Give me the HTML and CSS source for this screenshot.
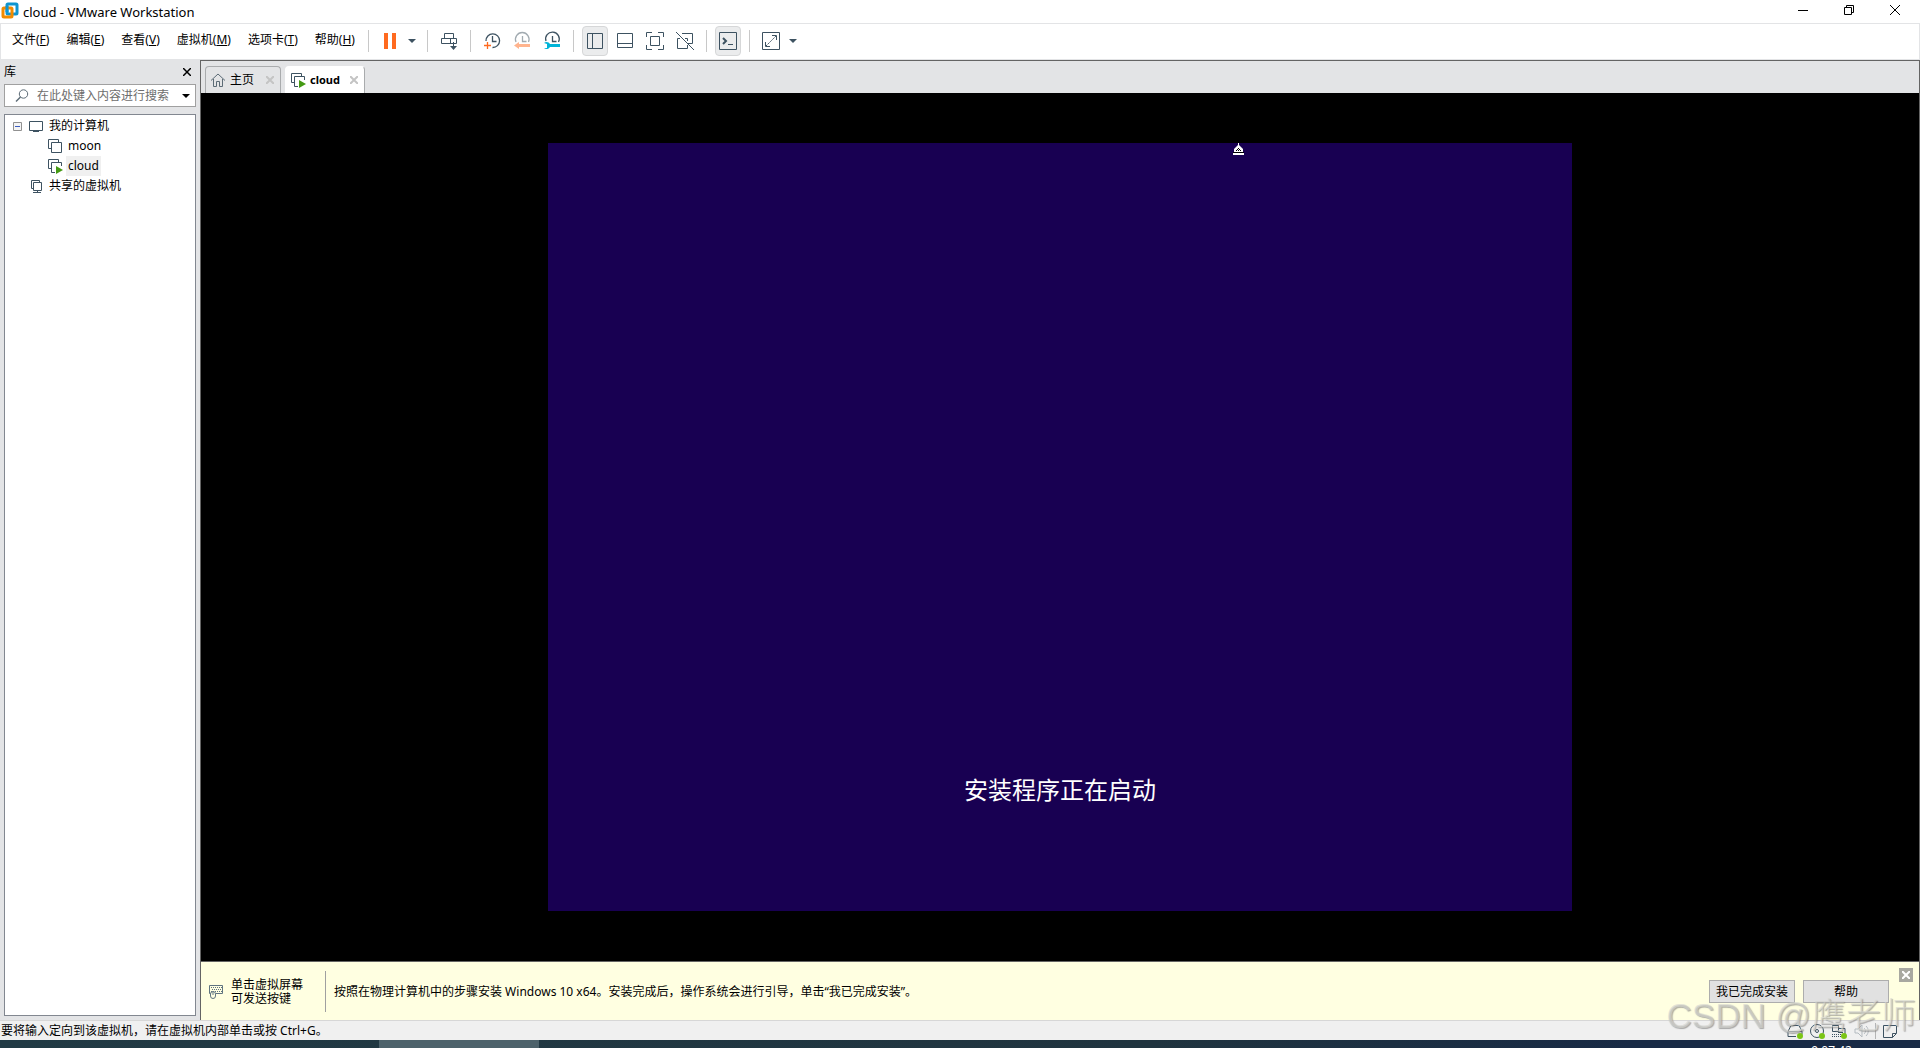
FILE: index.html
```html
<!DOCTYPE html>
<html lang="zh-CN">
<head>
    <meta charset="UTF-8">
    <meta name="viewport" content="width=device-width, initial-scale=1.0">
    <title>cloud - VMware Workstation</title>
    <link rel="stylesheet" href="styles.css">
</head>
<body>
    <header class="titlebar">
        <svg class="logo" width="18" height="18" viewBox="0 0 18 18" fill="none">
            <rect x="6" y="2" width="10" height="10" rx="1" stroke="#0f95d0" stroke-width="3"/>
            <rect x="2" y="6" width="9" height="9" rx="1" stroke="#f38b00" stroke-width="3"/>
            <path d="M6 4v6" stroke="#0f95d0" stroke-width="3"/>
        </svg>
        <h1 class="title">cloud - VMware Workstation</h1>
        <div class="window-controls">
            <button type="button" class="window-button" aria-label="最小化">
                <svg width="12" height="12" viewBox="0 0 12 12"><path d="M1 6.500h10" stroke="#000"/></svg>
            </button>
            <button type="button" class="window-button" aria-label="还原">
                <svg width="12" height="12" viewBox="0 0 12 12" fill="none" stroke="#000"><path d="M1.500 3.500h7v7h-7zM3.500 3V1.500h7v7H9"/></svg>
            </button>
            <button type="button" class="window-button" aria-label="关闭">
                <svg width="12" height="12" viewBox="0 0 12 12"><path d="M1 1l10 10M11 1L1 11" stroke="#000"/></svg>
            </button>
        </div>
    </header>

    <div class="toolbar">
        <nav class="menu">
            <button type="button" class="menu-item">文件(<u>F</u>)</button>
            <button type="button" class="menu-item">编辑(<u>E</u>)</button>
            <button type="button" class="menu-item">查看(<u>V</u>)</button>
            <button type="button" class="menu-item">虚拟机(<u>M</u>)</button>
            <button type="button" class="menu-item">选项卡(<u>T</u>)</button>
            <button type="button" class="menu-item">帮助(<u>H</u>)</button>
        </nav>
        <div class="tool-group">
            <button type="button" class="tool tool-split" aria-label="挂起">
                <svg width="20" height="20" viewBox="0 0 20 20"><path d="M4 2h4v16H4zM12 2h4v16h-4z" fill="#ff6a1f"/></svg>
                <svg width="8" height="4" viewBox="0 0 8 4"><path d="M0 0h8L4 4z" fill="#3d5261"/></svg>
            </button>
        </div>
        <div class="tool-group">
            <button type="button" class="tool" aria-label="发送 Ctrl+Alt+Del">
                <svg width="20" height="20" viewBox="0 0 20 20" fill="none" stroke="#3d5261"><path d="M5.500 7.500v-5h9v5M2.500 7.500h15v5h-15zM11.500 7.500v5M14.500 11v6"/><path d="M11 15h7l-3.500 4z" fill="#3d5261" stroke="none"/></svg>
            </button>
        </div>
        <div class="tool-group">
            <button type="button" class="tool" aria-label="拍摄快照">
                <svg width="20" height="20" viewBox="0 0 20 20" fill="none" stroke="#3d5261"><path d="M4 10A6.800 6.800 0 1 1 10.500 16.500M10.500 5v5.500h4" stroke-width="1.300"/><path d="M2 14.500h7M5.500 11v7" stroke="#ff6a1f" stroke-width="1.300"/></svg>
            </button>
            <button type="button" class="tool" aria-label="恢复快照" disabled>
                <svg width="20" height="20" viewBox="0 0 20 20" fill="none" stroke="#a2abb1"><path d="M4 11A6.800 6.800 0 1 1 16.500 11M10.500 5v5.500h4" stroke-width="1.300"/><path d="M2 14.500L7 11v2h11v3H7v2z" fill="#ffb48e" stroke="none"/></svg>
            </button>
            <button type="button" class="tool" aria-label="管理快照">
                <svg width="20" height="20" viewBox="0 0 20 20" fill="none" stroke="#3d5261"><path d="M4 10A6.800 6.800 0 1 1 16.500 11M10.500 5v5.500h4" stroke-width="1.300"/><path d="M2 12c2-2 5-1 6 1h10v3H8c-1 2-4 3-6 1h3v-4z" fill="#00b4d8" stroke="none"/></svg>
            </button>
        </div>
        <div class="tool-group">
            <button type="button" class="tool tool-active" aria-label="显示库">
                <svg width="20" height="20" viewBox="0 0 20 20" fill="none" stroke="#3d5261"><path d="M2.500 2.500h15v15h-15zM7.500 2v16"/></svg>
            </button>
            <button type="button" class="tool" aria-label="缩略图栏">
                <svg width="20" height="20" viewBox="0 0 20 20" fill="none" stroke="#3d5261"><path d="M2.500 2.500h15v14h-15zM2 12.500h16"/></svg>
            </button>
            <button type="button" class="tool" aria-label="全屏">
                <svg width="20" height="20" viewBox="0 0 20 20" fill="none" stroke="#3d5261"><path d="M1.500 6V1.500H7M13 1.500h5.500V6M18.500 14v4.500H13M7 18.500H1.500V14M5.500 5.500h9v9h-9z"/></svg>
            </button>
            <button type="button" class="tool" aria-label="Unity">
                <svg width="20" height="20" viewBox="0 0 20 20" fill="none" stroke="#3d5261"><path d="M1 1l18 18M7 2.500h10.500v10H13M5 7.500H2.500v10h10V14M10 7.500h2.500V10"/></svg>
            </button>
        </div>
        <div class="tool-group">
            <button type="button" class="tool tool-active" aria-label="控制台视图">
                <svg width="20" height="20" viewBox="0 0 20 20" fill="none" stroke="#3d5261"><path d="M1.500 1.500h17v17h-17zM10 13.500h5"/><path d="M5 7l3 3-3 3" stroke-width="2"/></svg>
            </button>
        </div>
        <div class="tool-group">
            <button type="button" class="tool tool-split" aria-label="自由拉伸">
                <svg width="20" height="20" viewBox="0 0 20 20" fill="none" stroke="#3d5261"><path d="M1.500 1.500h17v17h-17zM11 4.500h4.500V9M4.500 11v4.500H9"/><path d="M5 15L15 5" stroke-dasharray="2 1"/></svg>
                <svg width="8" height="4" viewBox="0 0 8 4"><path d="M0 0h8L4 4z" fill="#3d5261"/></svg>
            </button>
        </div>
    </div>

    <div class="workspace">
        <aside class="library">
            <div class="library-header">
                <h2 class="library-title">库</h2>
                <button type="button" class="library-close" aria-label="关闭库">
                    <svg width="8" height="8" viewBox="0 0 8 8"><path d="M0 0l8 8M8 0L0 8" stroke="#000" stroke-width="1.500"/></svg>
                </button>
            </div>
            <div class="search">
                <svg width="14" height="14" viewBox="0 0 14 14" fill="none" stroke="#5c6b76"><circle cx="8.500" cy="5" r="4.200"/><path d="M5.500 8L1 12.500" stroke-width="1.500"/></svg>
                <input class="search-input" type="text" aria-label="搜索" placeholder="在此处键入内容进行搜索">
                <button type="button" class="search-arrow" aria-label="搜索选项">
                    <svg width="8" height="4" viewBox="0 0 8 4"><path d="M0 0h8L4 4z"/></svg>
                </button>
            </div>
            <ul class="tree">
                <li class="tree-row">
                    <svg width="9" height="9" viewBox="0 0 9 9" fill="#f4f4f4" stroke="#919191"><path d="M.5.5h8v8h-8z"/><path d="M2 4.500h5" stroke="#3b5cc0"/></svg>
                    <svg class="tree-icon" width="16" height="16" viewBox="0 0 16 16" fill="none" stroke="#3d5261"><path d="M1.500 3.500h13v9h-13zM8 12v2M5 13.500h6"/></svg>
                    <span class="tree-label">我的计算机</span>
                </li>
                <li class="tree-row tree-child">
                    <svg class="tree-icon" width="16" height="16" viewBox="0 0 16 16" fill="none" stroke="#3d5261"><path d="M4 10.500H1.500v-9h10V4M4.500 4.500h10v10h-10z"/></svg>
                    <span class="tree-label">moon</span>
                </li>
                <li class="tree-row tree-child">
                    <svg class="tree-icon" width="16" height="16" viewBox="0 0 16 16" fill="none" stroke="#3d5261"><path d="M4 10.500H1.500v-9h10V4M8 14.500H4.500v-10h10V8"/><path d="M9 8l7 4-7 4z" fill="#449a13" stroke="none"/></svg>
                    <span class="tree-label tree-selected">cloud</span>
                </li>
                <li class="tree-row tree-shared">
                    <svg class="tree-icon" width="16" height="16" viewBox="0 0 16 16" fill="none" stroke="#3d5261"><path d="M5 10.500H3.500v-8h8V4M5.500 4.500h8v8h-8zM9.500 12v3M5 14.500h8"/></svg>
                    <span class="tree-label">共享的虚拟机</span>
                </li>
            </ul>
        </aside>

        <main class="console">
            <div class="tabs">
                <div class="tab tab-home">
                    <svg width="16" height="16" viewBox="0 0 16 16" fill="none" stroke="#5c6b76"><path d="M1 8.500L8 2l7 6.500M3.500 7v7.500h3v-5h3v5h3V7"/></svg>
                    <button type="button" class="tab-label">主页</button>
                    <button type="button" class="tab-close" aria-label="关闭主页">
                        <svg width="8" height="8" viewBox="0 0 8 8"><path d="M0 0l8 8M8 0L0 8" stroke="#c4c4c4" stroke-width="2"/></svg>
                    </button>
                </div>
                <div class="tab tab-current">
                    <svg width="16" height="16" viewBox="0 0 16 16" fill="none" stroke="#3d5261"><path d="M4 10.500H1.500v-9h10V4M8 14.500H4.500v-10h10V8"/><path d="M9 8l7 4-7 4z" fill="#449a13" stroke="none"/></svg>
                    <button type="button" class="tab-label">cloud</button>
                    <button type="button" class="tab-close" aria-label="关闭 cloud">
                        <svg width="8" height="8" viewBox="0 0 8 8"><path d="M0 0l8 8M8 0L0 8" stroke="#c4c4c4" stroke-width="2"/></svg>
                    </button>
                </div>
            </div>
            <div class="stage">
                <div class="guest">
                    <svg class="cursor" width="13" height="12" viewBox="0 0 13 12"><path d="M6 0h1v2l4 4v3h1v3H1V9h1V6l4-4z" fill="#fff"/><path d="M1 9.500h11M6 5.500h1M5 6.500h1M7 6.500h1M4 7.500h1M6 7.500h1M8 7.500h1" stroke="#000"/></svg>
                    <p class="guest-message">安装程序正在启动</p>
                </div>
            </div>
            <div class="notice">
                <div class="notice-input">
                    <svg width="15" height="16" viewBox="0 0 15 16" fill="none" stroke="#5f7480"><path d="M3 9.500H.5v-8h13v8H7"/><path d="M2 3.500h11M3 5.500h10M2 7.500h11" stroke-dasharray="1 1"/><rect x="1.500" y="7.500" width="5" height="7" rx="2.500" fill="#ffffe1"/><path d="M4 8v3"/></svg>
                    <span>单击虚拟屏幕<br>可发送按键</span>
                </div>
                <p class="notice-text">按照在物理计算机中的步骤安装 Windows 10 x64。安装完成后，操作系统会进行引导，单击“我已完成安装”。</p>
                <div class="notice-actions">
                    <button type="button" class="notice-button">我已完成安装</button>
                    <button type="button" class="notice-button">帮助</button>
                </div>
                <button type="button" class="notice-close" aria-label="关闭提示">
                    <svg width="8" height="8" viewBox="0 0 8 8"><path d="M0 0l8 8M8 0L0 8" stroke="#fff" stroke-width="2"/></svg>
                </button>
            </div>
        </main>
    </div>

    <footer class="statusbar">
        <span>要将输入定向到该虚拟机，请在虚拟机内部单击或按 Ctrl+G。</span>
        <div class="devices">
            <svg width="16" height="16" viewBox="0 0 16 16" fill="none" stroke="#3d5261"><path d="M1 13.500V8.500L4 2.500h8l3 6v3M1 8.500h14M1 13.500h8"/><circle cx="13" cy="13" r="3" fill="#7cc516" stroke="none"/></svg>
            <svg width="16" height="16" viewBox="0 0 16 16" fill="none" stroke="#3d5261"><circle cx="8" cy="8" r="6.500"/><circle cx="8" cy="8" r="1.500"/><circle cx="13" cy="13" r="3" fill="#7cc516" stroke="none"/></svg>
            <svg width="16" height="16" viewBox="0 0 16 16" fill="none" stroke="#3d5261"><path d="M1.500 8.500v-6h6v6zM7 5.500h7v7M7 9.500h5"/><path d="M1 13.500h9M1 11.500h9" stroke-dasharray="1 1"/><circle cx="13" cy="13" r="3" fill="#7cc516" stroke="none"/></svg>
            <svg width="16" height="16" viewBox="0 0 16 16" fill="none" stroke="#b4bbc0"><path d="M2 6h3l4-4v12l-4-4H2zM11 5c2 2 2 4 0 6M13 3c3 3 3 7 0 10"/></svg>
            <span class="devices-rule"></span>
            <svg width="16" height="16" viewBox="0 0 16 16" fill="none" stroke="#3d5261"><path d="M1.500 2.500h13v8l-4 4h-9zM14 10.500h-3.500v4"/></svg>
        </div>
    </footer>

    <div class="taskbar">
        <div class="taskbar-app"></div>
        <time class="taskbar-clock">9:07:42</time>
    </div>

    <div class="watermark">CSDN @鹰老师</div>
</body>
</html>
```
FILE: styles.css
```css
* {
    box-sizing: border-box;
}
body {
    margin: 0;
    height: 100vh;
    display: flex;
    flex-direction: column;
    overflow: hidden;
    background: #fff;
    color: #000;
    font-family: "Noto Sans", "Noto Sans CJK SC", sans-serif;
    font-size: 12px;
    line-height: 16px;
}
button {
    margin: 0;
    padding: 0;
    border: 0;
    background: none;
    color: inherit;
    font: inherit;
    white-space: nowrap;
}
svg {
    display: block;
    flex: none;
}
h1, h2, p, ul {
    margin: 0;
    padding: 0;
    font-size: 12px;
    font-weight: normal;
}

/* title bar */
.titlebar {
    flex: none;
    display: flex;
    align-items: center;
    height: 24px;
    padding-left: 1px;
    border-bottom: 1px solid #e3e4e6;
}
.logo {
    margin-bottom: 2px;
}
.title {
    margin-left: 4px;
    font-size: 13px;
}
.window-controls {
    display: flex;
    margin-left: auto;
    padding-bottom: 3px;
}
.window-button {
    display: flex;
    justify-content: center;
    width: 46px;
    padding-right: 4px;
}

/* menu and tools */
.toolbar {
    flex: none;
    display: flex;
    align-items: center;
    height: 36px;
    padding-bottom: 1px;
    border: 1px solid #e3e4e6;
    border-width: 0 1px 1px;
}
.menu {
    display: flex;
    gap: 17px;
    padding: 0 13px 2px 11px;
}
.tool-group {
    display: flex;
    align-items: center;
    gap: 2px;
    height: 22px;
    padding: 0 7px;
    border-left: 1px solid #c8c8c8;
}
.tool {
    display: flex;
    align-items: center;
    justify-content: center;
    width: 28px;
    height: 30px;
    border: 1px solid transparent;
    border-radius: 4px;
}
.tool-split {
    justify-content: flex-start;
    width: 44px;
    gap: 8px;
    padding-left: 3px;
}
.tool-active {
    width: 26px;
    margin: 0 1px;
    border-color: #d6d7d8;
    background: #ebeced;
}

.workspace {
    flex: 1;
    display: flex;
    min-height: 0;
}

/* library */
.library {
    flex: none;
    display: flex;
    flex-direction: column;
    width: 200px;
    padding: 0 4px;
    background: #e3e4e6;
}
.library-header {
    display: flex;
    align-items: center;
    justify-content: space-between;
    height: 24px;
    padding-right: 5px;
}
.search {
    display: flex;
    align-items: center;
    height: 23px;
    padding: 0 5px 0 10px;
    border: 1px solid #a0a0a0;
    background: #fff;
}
.search-input {
    flex: 1;
    min-width: 0;
    margin-left: 8px;
    padding: 0;
    border: 0;
    outline: 0;
    background: none;
    font: inherit;
}
.search-input::placeholder {
    color: #6d6d6d;
    opacity: 1;
}
.tree {
    flex: 1;
    margin: 7px 0 4px;
    padding: 1px 8px;
    border: 1px solid #828790;
    background: #fff;
    list-style: none;
}
.tree-row {
    display: flex;
    align-items: center;
    height: 20px;
}
.tree-icon {
    margin: 0 3px 0 6px;
}
.tree-child {
    padding-left: 28px;
}
.tree-shared {
    padding-left: 9px;
}
.tree-label {
    padding: 2px;
}
.tree-selected {
    background: #f0f0f0;
}

/* console */
.console {
    flex: 1;
    display: flex;
    flex-direction: column;
    min-width: 0;
    border: 1px solid #646464;
    border-width: 1px 1px 0 1px;
}
.tabs {
    flex: none;
    display: flex;
    align-items: flex-end;
    gap: 4px;
    height: 32px;
    padding-left: 4px;
    background: #e3e4e6;
}
.tab {
    display: flex;
    align-items: center;
    gap: 4px;
    height: 27px;
    padding: 0 6px 0 4px;
    border: 1px solid #a9abad;
    border-bottom: 0;
    border-radius: 4px 4px 0 0;
}
.tab-close {
    padding-left: 8px;
}
.tab-current {
    border-color: #fff #a9abad #fff #fff;
    background: #fff;
}
.tab-current .tab-label {
    font-size: 11px;
    font-weight: bold;
}
.tab-current .tab-close {
    padding-left: 6px;
}
.stage {
    flex: 1;
    display: flex;
    align-items: center;
    justify-content: center;
    min-height: 0;
    background: #000;
}
.guest {
    position: relative;
    display: flex;
    align-items: flex-end;
    justify-content: center;
    height: 768px;
    aspect-ratio: 4 / 3;
    padding-bottom: 101px;
    background: #180052;
}
.guest-message {
    color: #fff;
    font-size: 24px;
    line-height: 40px;
}
.cursor {
    position: absolute;
    top: 0;
    left: 684px;
}

/* install hint */
.notice {
    position: relative;
    flex: none;
    display: flex;
    align-items: center;
    height: 59px;
    padding: 0 30px 0 8px;
    border-top: 1px solid #646464;
    background: #ffffe1;
}
.notice-input {
    display: flex;
    align-items: center;
    gap: 7px;
    width: 117px;
    height: 41px;
    padding-top: 2px;
    border-right: 1px solid #a0a0a0;
    line-height: 14px;
}
.notice-text {
    margin-left: 8px;
    padding-top: 2px;
}
.notice-actions {
    display: flex;
    gap: 8px;
    margin-left: auto;
}
.notice-button {
    width: 86px;
    height: 23px;
    padding-top: 2px;
    border: 1px solid #adadad;
    background: #e1e1e1;
}
.notice-close {
    position: absolute;
    top: 6px;
    right: 6px;
    display: flex;
    align-items: center;
    justify-content: center;
    width: 14px;
    height: 14px;
    background: #a8a8a0;
}

/* status bar */
.statusbar {
    flex: none;
    display: flex;
    align-items: center;
    justify-content: space-between;
    height: 20px;
    padding: 1px 22px 0 1px;
    border-top: 1px solid #d7d7d7;
    background: #f0f0f0;
}
.devices {
    display: flex;
    gap: 6px;
}
.devices-rule {
    width: 1px;
    background: #b4b4b4;
}

/* desktop taskbar */
.taskbar {
    flex: none;
    display: flex;
    justify-content: space-between;
    height: 8px;
    padding: 0 68px 0 379px;
    overflow: hidden;
    background: linear-gradient(90deg, #213a44, #20343f 60%, #182a45 85%);
}
.taskbar-app {
    width: 160px;
    background: #4d626b;
}
.taskbar-clock {
    padding-top: 3px;
    color: #fff;
}
.watermark {
    position: absolute;
    right: 4px;
    bottom: 12px;
    color: rgba(215, 215, 210, 0.65);
    font-family: "Liberation Sans", "Noto Sans CJK SC", sans-serif;
    font-size: 35px;
    font-weight: 300;
    line-height: 40px;
    text-shadow: 1px 1px 1px rgba(120, 120, 120, 0.6);
    pointer-events: none;
}
```
